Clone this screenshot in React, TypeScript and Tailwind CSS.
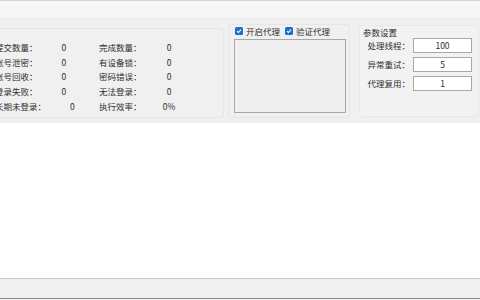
import React from "react";

const FONT = { fontFamily: '"Noto Sans CJK SC", "Microsoft YaHei", sans-serif' };

const STATS: [string, string, string, string][] = [
  ["提交数量：", "0", "完成数量：", "0"],
  ["账号泄密：", "0", "有设备锁：", "0"],
  ["账号回收：", "0", "密码错误：", "0"],
  ["登录失败：", "0", "无法登录：", "0"],
  ["长期未登录：", "0", "执行效率：", "0%"],
];

const PARAMS: [string, string][] = [
  ["处理线程：", "100"],
  ["异常重试：", "5"],
  ["代理复用：", "1"],
];

function Check({ label }: { label: string }) {
  return (
    <label className="flex items-center gap-[3px]">
      <span className="flex h-[8px] w-[8px] items-center justify-center rounded-[1.5px] bg-[#1d6fcf]">
        <svg width="6" height="6" viewBox="0 0 6 6" fill="none">
          <path d="M1 3.1 L2.4 4.5 L5 1.6" stroke="white" strokeWidth="1.1" />
        </svg>
      </span>
      <span>{label}</span>
    </label>
  );
}

export default function App() {
  return (
    <div
      className="flex h-[300px] w-[480px] flex-col overflow-hidden bg-[#f0f0f0] text-[8.5px] leading-none text-[#2e2e2e]"
      style={FONT}
    >
      {/* top strip */}
      <div className="h-[17px] border-t border-[#d4d4d4] bg-[#f7f7f7]" />

      {/* panels */}
      <div className="flex h-[106px] items-start">
        {/* stats */}
        <div className="-ml-[16px] mt-[11px] h-[90px] w-[240px] rounded-[2px] border border-[#e6e6e6] pl-[10px] pt-[11px]">
          {STATS.map(([l1, v1, l2, v2]) => (
            <div key={l1} className="flex h-[14.7px] items-center whitespace-nowrap">
              <div className="flex w-[104px]">
                <span>{l1}</span>
                <span className="ml-[24px]">{v1}</span>
              </div>
              <span className="w-[63px]">{l2}</span>
              <span className="w-[14px] text-center">{v2}</span>
            </div>
          ))}
        </div>

        {/* proxy */}
        <div className="ml-[4px] mt-[7px] h-[94px] w-[122px] rounded-[2px] border border-[#e6e6e6] pl-[5px] pt-[1px]">
          <div className="flex h-[10px] items-center gap-[5px] pl-[1px]">
            <Check label="开启代理" />
            <Check label="验证代理" />
          </div>
          <div className="mt-[3px] h-[74px] w-[112px] border border-[#a8a8a8] bg-[#efefef]" />
        </div>

        {/* params */}
        <div className="ml-[9px] mt-[8px] h-[92px] w-[120px] rounded-[3px] border border-[#e8e8e8] bg-[#f2f2f2] pl-[3px] pt-[1px]">
          <div className="h-[10px] leading-[10px]">参数设置</div>
          <div className="mt-[1px] flex flex-col gap-[4px]">
            {PARAMS.map(([label, value]) => (
              <div key={label} className="flex items-center">
                <span className="w-[47px] text-right whitespace-nowrap">{label}</span>
                <div className="ml-[3px] flex h-[15px] w-[59px] items-center justify-center border border-[#a8a8a8] bg-white">
                  {value}
                </div>
              </div>
            ))}
          </div>
        </div>
      </div>

      {/* white content */}
      <div className="h-[155px] bg-white" />

      {/* status bar */}
      <div className="h-[21px] border-t border-b border-t-[#c6c6c6] border-b-[#8a8a8a] bg-[#f0f0f0]" />
    </div>
  );
}
